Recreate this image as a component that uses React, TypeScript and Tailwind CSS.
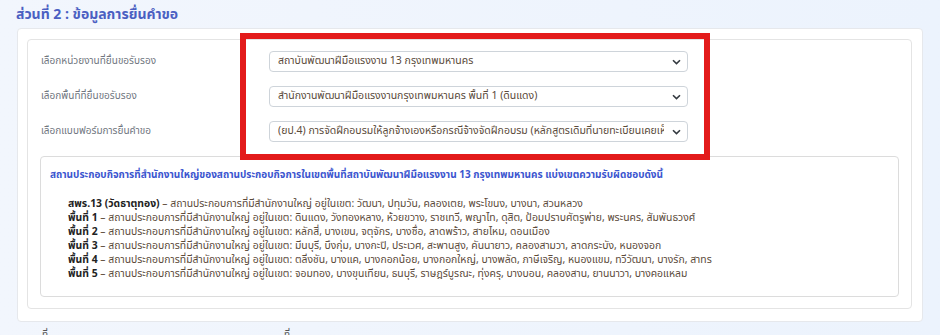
const units = [
  "สถาบันพัฒนาฝีมือแรงงาน 13 กรุงเทพมหานคร",
];

const fields = [
  {
    label: "เลือกหน่วยงานที่ยื่นขอรับรอง",
    value: "สถาบันพัฒนาฝีมือแรงงาน 13 กรุงเทพมหานคร",
  },
  {
    label: "เลือกพื้นที่ที่ยื่นขอรับรอง",
    value: "สำนักงานพัฒนาฝีมือแรงงานกรุงเทพมหานคร พื้นที่ 1 (ดินแดง)",
  },
  {
    label: "เลือกแบบฟอร์มการยื่นคำขอ",
    value:
      "(ยป.4) การจัดฝึกอบรมให้ลูกจ้างเองหรือกรณีจ้างจัดฝึกอบรม (หลักสูตรเดิมที่นายทะเบียนเคยเห็นชอบแล้ว)",
  },
];

const areas = [
  {
    name: "สพร.13 (วัดธาตุทอง)",
    list: "วัฒนา, ปทุมวัน, คลองเตย, พระโขนง, บางนา, สวนหลวง",
  },
  {
    name: "พื้นที่ 1",
    list: "ดินแดง, วังทองหลาง, ห้วยขวาง, ราชเทวี, พญาไท, ดุสิต, ป้อมปราบศัตรูพ่าย, พระนคร, สัมพันธวงศ์",
  },
  {
    name: "พื้นที่ 2",
    list: "หลักสี่, บางเขน, จตุจักร, บางซื่อ, ลาดพร้าว, สายไหม, ดอนเมือง",
  },
  {
    name: "พื้นที่ 3",
    list: "มีนบุรี, บึงกุ่ม, บางกะปิ, ประเวศ, สะพานสูง, คันนายาว, คลองสามวา, ลาดกระบัง, หนองจอก",
  },
  {
    name: "พื้นที่ 4",
    list: "ตลิ่งชัน, บางแค, บางกอกน้อย, บางกอกใหญ่, บางพลัด, ภาษีเจริญ, หนองแขม, ทวีวัฒนา, บางรัก, สาทร",
  },
  {
    name: "พื้นที่ 5",
    list: "จอมทอง, บางขุนเทียน, ธนบุรี, ราษฎร์บูรณะ, ทุ่งครุ, บางบอน, คลองสาน, ยานนาวา, บางคอแหลม",
  },
];

const Chevron = () => (
  <svg width="9" height="6" viewBox="0 0 9 6" className="shrink-0">
    <path d="M1 1.2 L4.5 4.6 L8 1.2" fill="none" stroke="#343a40" strokeWidth="1.6" />
  </svg>
);

const SelectBox = ({ value }: { value: string }) => (
  <div className="flex h-[21px] w-[419px] items-center gap-2 rounded border border-[#ced4da] bg-white pl-[8px] pr-[6px] text-[10.5px] text-[#5a4a3a]">
    <span className="flex-1 overflow-hidden whitespace-nowrap">{value}</span>
    <Chevron />
  </div>
);

export default function App() {
  return (
    <div
      className="relative h-[335px] w-[940px] overflow-hidden bg-gradient-to-r from-[#f2f6fd] to-[#ecf3fd]"
      style={{ fontFamily: '"Noto Sans Thai", "Noto Sans", "Open Sans", sans-serif' }}
    >
      <div className="pl-[16px] pr-[17px] pt-[5px]">
        <h2 className="h-[23px] text-[14px] font-bold leading-[20px] text-[#4b5fc2]">
          ส่วนที่ 2 : ข้อมูลการยื่นคำขอ
        </h2>

        <div className="ml-[1px] rounded border border-[#e6e8ec] bg-white pb-[12px] pl-[9px] pr-[10px] pt-[10px]">
          <div className="rounded border border-[#e4e4e4] px-[12px] pb-[11px] pt-[11px]">
            <div className="flex flex-col gap-[14px] pl-[1px]">
              {fields.map((f) => (
                <div key={f.label} className="flex items-center">
                  <div className="w-[228px] text-[10px] text-[#707680]">{f.label}</div>
                  <SelectBox value={f.value} />
                </div>
              ))}
            </div>

            <div className="mt-[14px] h-[141px] rounded border border-[#dcdcdc] pl-[9px] pt-[11px]">
              <div className="text-[10px] font-bold leading-[14px] text-[#3b55cf]">
                สถานประกอบกิจการที่สำนักงานใหญ่ของสถานประกอบกิจการในเขตพื้นที่{units[0]} แบ่งเขตความรับผิดชอบดังนี้
              </div>
              <div className="ml-[18px] mt-[15px] flex flex-col text-[10.4px] leading-[14px]">
                {areas.map((a) => (
                  <div key={a.name} className="whitespace-nowrap">
                    <span className="font-bold text-[#222]">{a.name}</span>
                    <span className="text-[#5b4a3a]">
                      {" "}– สถานประกอบการที่มีสำนักงานใหญ่ อยู่ในเขต: {a.list}
                    </span>
                  </div>
                ))}
              </div>
            </div>
          </div>
        </div>

        <div className="mt-[6px] flex text-[10px] text-[#555]">
          <span className="ml-[26px]">ที่</span>
          <span className="ml-[236px]">ที่</span>
        </div>
      </div>

      <div className="absolute left-[240px] top-[33px] h-[127px] w-[470px] border-[6px] border-[#e31b1b]" />
    </div>
  );
}
